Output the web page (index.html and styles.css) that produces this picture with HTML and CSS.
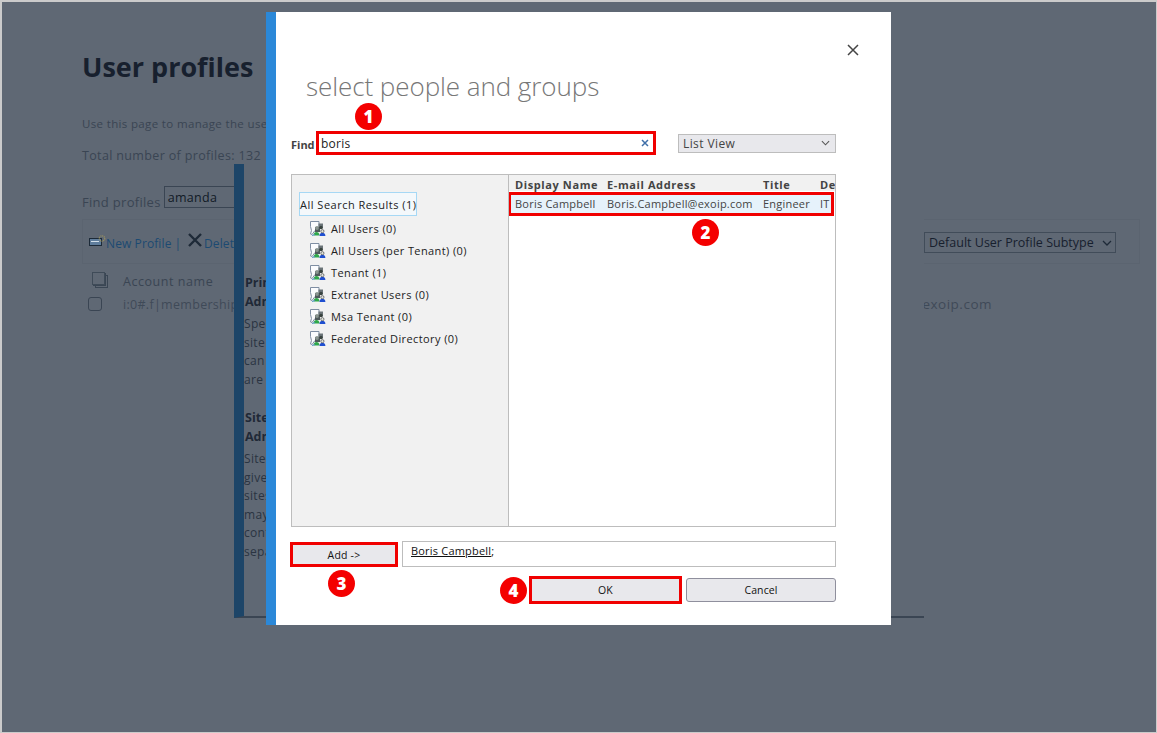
FILE: index.html
```html
<!DOCTYPE html>
<html lang="en">
<head>
<meta charset="utf-8">
<title>User profiles</title>
<link rel="stylesheet" href="styles.css">
</head>
<body>
<svg class="defs" width="0" height="0" aria-hidden="true">
  <symbol id="people" viewBox="0 0 17 17">
    <path d="M1.500 1.500h8.500v7l-4 2-3 4-1.500-.5 1-3.500-1-4z" fill="#fbfcfe" stroke="#7f8ea3" stroke-width="1"/>
    <path d="M9.500 3.500h4.500v5h-4.500z" fill="#6b7478"/>
    <path d="M6 7h5v5H6z" fill="#4f5a5c"/>
    <circle cx="8" cy="8" r="1.900" fill="#8a9590"/>
    <circle cx="12" cy="7.500" r="1.700" fill="#39433f"/>
    <path d="M4.500 15.500c0-2.300 1.500-3.400 3-3.400s3 1.100 3 3.400z" fill="#2fa84a"/>
    <path d="M10.500 16c0-2.200 1.300-3.300 2.900-3.300s3 1.100 3 3.300z" fill="#1f4fd0"/>
    <circle cx="13.400" cy="11.200" r="1.600" fill="#dfe3dc" stroke="#333" stroke-width=".6"/>
    <path d="M3 15.500l3-1" stroke="#4f8fc8" stroke-width="1"/>
  </symbol>
</svg>
<div class="screen">
  <main class="page">
    <h1 class="page-title">User profiles</h1>
    <p class="page-intro">Use this page to manage the user profiles</p>
    <p class="page-total">Total number of profiles: 132</p>
    <div class="find-profiles">
      <label class="find-profiles-label">Find profiles</label>
      <span class="find-profiles-input">amanda</span>
    </div>
    <div class="toolbar">
      <svg class="tb-icon-new" viewBox="0 0 17 12" width="17" height="12" aria-hidden="true">
        <rect x="0.500" y="3.500" width="12" height="7" fill="#5f7d9c" stroke="#1c2a38"/>
        <path d="M2 6.500h8" stroke="#d3dfe9"/>
        <circle cx="13" cy="3.500" r="2.700" fill="none" stroke="#9a9160" stroke-width="1.300" stroke-dasharray="1 .8"/>
      </svg>
      <span class="tb-link">New Profile</span>
      <span class="tb-sep">|</span>
      <svg class="tb-icon-del" viewBox="0 0 14 14" width="14" height="14" aria-hidden="true">
        <path d="M1 1l12 12M13 1L1 13" stroke="#1e2a38" stroke-width="2.400"/>
      </svg>
      <span class="tb-link">Delete</span>
      <span class="subtype">Default User Profile Subtype
        <svg class="chev" viewBox="0 0 10 6" width="10" height="6" aria-hidden="true"><path d="M1 1l4 4 4-4" fill="none" stroke="#1e2a38" stroke-width="1.300"/></svg>
      </span>
    </div>
    <div class="list-head">
      <svg class="copy-icon" viewBox="0 0 16 16" width="16" height="16" aria-hidden="true">
        <rect x="3.500" y="3.500" width="12" height="12" fill="none" stroke="#3a4654"/>
        <rect x="1.500" y="1.500" width="12" height="12" fill="#5f6874" stroke="#3a4654"/>
        <rect x="0.500" y="0.500" width="12" height="12" fill="#5f6874" stroke="#3f4b58"/>
      </svg>
      <span>Account name</span>
    </div>
    <div class="list-row">
      <span class="check"></span>
      <span class="acct">i:0#.f|membership</span>
      <span class="acct-end">@exoip.com</span>
    </div>
  </main>

  <aside class="back-dialog">
    <h3 class="back-h">Primary<br>Admin</h3>
    <p class="back-p">Specify<br>site<br>can<br>are</p>
    <h3 class="back-h back-h-2">Site<br>Admin</h3>
    <p class="back-p">Site<br>give<br>sites<br>may<br>conf<br>sepa</p>
  </aside>

  <section class="dialog">
    <button class="close" aria-label="Close">
      <svg viewBox="0 0 12 12" width="12" height="12" aria-hidden="true"><path d="M1 1l10 10M11 1L1 11" stroke="#444" stroke-width="1.500"/></svg>
    </button>
    <h2 class="dialog-title">select people and groups</h2>
    <div class="find-row">
      <label class="find-label">Find</label>
      <div class="find-input">
        <span class="find-value">boris</span>
        <svg class="find-x" viewBox="0 0 8 8" width="8" height="8" aria-hidden="true"><path d="M1 1l6 6M7 1L1 7" stroke="#3f6fa8" stroke-width="1.500"/></svg>
      </div>
      <div class="view-select">
        <span>List View</span>
        <svg viewBox="0 0 10 6" width="9" height="6" aria-hidden="true"><path d="M1 1l4 4 4-4" fill="none" stroke="#555" stroke-width="1.200"/></svg>
      </div>
    </div>
    <div class="picker">
      <div class="tree">
        <div class="tree-root">All Search Results (1)</div>
        <ul class="tree-list">
          <li class="tree-item"><svg class="pi" width="17" height="17"><use href="#people"/></svg>All Users (0)</li>
          <li class="tree-item"><svg class="pi" width="17" height="17"><use href="#people"/></svg>All Users (per Tenant) (0)</li>
          <li class="tree-item"><svg class="pi" width="17" height="17"><use href="#people"/></svg>Tenant (1)</li>
          <li class="tree-item"><svg class="pi" width="17" height="17"><use href="#people"/></svg>Extranet Users (0)</li>
          <li class="tree-item"><svg class="pi" width="17" height="17"><use href="#people"/></svg>Msa Tenant (0)</li>
          <li class="tree-item"><svg class="pi" width="17" height="17"><use href="#people"/></svg>Federated Directory (0)</li>
        </ul>
      </div>
      <div class="results">
        <div class="res-head">
          <span class="c1">Display Name</span>
          <span class="c2">E-mail Address</span>
          <span class="c3">Title</span>
          <span class="c4">Department</span>
        </div>
        <div class="res-row">
          <span class="c1">Boris Campbell</span>
          <span class="c2">Boris.Campbell@exoip.com</span>
          <span class="c3">Engineer</span>
          <span class="c4">IT</span>
        </div>
      </div>
    </div>
    <div class="add-row">
      <button class="add-btn">Add -&gt;</button>
      <div class="add-field"><span class="add-name">Boris Campbell</span>;</div>
    </div>
    <div class="action-row">
      <button class="btn btn-ok">OK</button>
      <button class="btn btn-cancel">Cancel</button>
    </div>
  </section>

  <span class="badge b1">1</span>
  <span class="badge b2">2</span>
  <span class="badge b3">3</span>
  <span class="badge b4">4</span>
</div>
</body>
</html>
```
FILE: styles.css
```css
* { box-sizing: border-box; }
html, body { margin: 0; padding: 0; }
body { font-family: "Open Sans", "Noto Sans", sans-serif; background: #cfcfcf; }
.defs { position: absolute; }
.screen {
  position: relative;
  width: 1157px;
  height: 733px;
  overflow: hidden;
  background: #5f6874;
  border: 2px solid #cbcbcb;
  border-right-width: 1px;
  border-bottom-width: 1px;
}

/* dimmed page */
.page { padding: 47px 16px 0 80px; color: #3a4553; }
.page-title { margin: 0; font-size: 27px; line-height: 36px; font-weight: 700; color: #17202e; font-family: "Open Sans", sans-serif; }
.page-intro { margin: 31px 0 0; font-size: 11.500px; line-height: 16px; letter-spacing: .35px; }
.page-total { margin: 15px 0 0; font-size: 12.500px; line-height: 17px; letter-spacing: .35px; }
.find-profiles { display: flex; align-items: flex-start; gap: 3px; margin-top: 22px; }
.find-profiles-label { font-size: 13px; line-height: 24px; letter-spacing: .3px; margin-top: 4px; }
.find-profiles-input { width: 100px; height: 22px; border: 1px solid #3a4553; font-size: 12.500px; line-height: 18px; padding: 2px 0 0 3px; color: #111a26; letter-spacing: .3px; }
.toolbar {
  display: flex; align-items: center;
  width: 1058px; height: 45px; margin-top: 5px; padding: 0 23px 0 6px;
  border: 1px solid #5b6470;
  font-size: 12px;
}
.tb-icon-new { margin-top: -2px; }
.tb-link { color: #1c4a72; margin-top: 4px; letter-spacing: .1px; }
.tb-sep { color: #1c4a72; margin: 4px 6px 0 3px; }
.tb-icon-del { margin: -4px 2px 0 1px; }
.subtype {
  display: flex; align-items: center; justify-content: space-between;
  width: 192px; height: 21px; margin: 2px 0 0 auto; padding: 0 3px 0 4px;
  border: 1px solid #414c59; font-size: 12.500px; color: #17202e;
}
.list-head { display: flex; align-items: center; margin-top: 5px; height: 24px; font-size: 12.500px; letter-spacing: .55px; padding-left: 10px; }
.copy-icon { margin-right: 15px; margin-top: -2px; }
.list-row { display: flex; align-items: center; height: 20px; margin-top: 1px; font-size: 12.500px; letter-spacing: .3px; padding-left: 6px; color: #3f4a58; }
.check { width: 14px; height: 14px; border: 1px solid #3a4553; border-radius: 3px; margin-right: 21px; }
.acct-end { margin-left: auto; margin-right: 148px; font-size: 13.500px; letter-spacing: .5px; }

/* second dialog behind */
.back-dialog {
  position: absolute; left: 232px; top: 162px; width: 690px; height: 454px;
  background: #5f6874;
  border-left: 10px solid #1d4568; border-bottom: 2px solid #3a4553;
  padding: 110px 0 0 0; color: #2a3442; font-size: 12px;
}
.back-h { margin: 0; font-size: 12.500px; line-height: 18.500px; font-weight: 700; color: #1f2937; padding-left: 1px; }
.back-h-2 { margin-top: 20px; }
.back-p { margin: 4px 0 0; line-height: 18.500px; font-size: 12px; letter-spacing: .3px; color: #2a3442; }

/* main dialog */
.dialog {
  position: absolute; left: 264px; top: 10px; width: 625px; height: 613px;
  background: #fff; border-left: 10px solid #2b88d8;
  padding: 0 55px 0 15px;
  color: #333;
}
.close { position: absolute; right: 32px; top: 32px; padding: 0; border: 0; background: none; display: block; width: 12px; height: 12px; }
.close svg { display: block; }
.dialog-title { margin: 56px 0 0 15px; font-size: 26px; line-height: 36px; font-weight: 300; color: #777; font-family: "Open Sans", sans-serif; letter-spacing: -.07px; }
.find-row { display: flex; align-items: center; margin-top: 27px; height: 24px; }
.find-label { width: 25px; font-size: 11px; font-weight: 700; color: #444; margin-top: 2px; }
.find-input {
  display: flex; align-items: center; justify-content: space-between;
  width: 340px; height: 24px; border: 3px solid #f00000; padding: 0 4px 0 2px;
  font-size: 12px; color: #222; letter-spacing: .25px;
}
.view-select {
  display: flex; align-items: center; justify-content: space-between;
  width: 158px; height: 19px; margin-left: 22px; padding: 0 5px 0 4px;
  background: #e8e8ec; border: 1px solid #bdbdbd;
  font-size: 12px; color: #444; letter-spacing: .4px;
}
.picker { display: flex; width: 545px; height: 353px; margin-top: 19px; border: 1px solid #bdbdbd; font-size: 11px; }
.tree { width: 217px; background: #f1f1f1; border-right: 1px solid #bdbdbd; padding-top: 17px; padding-left: 7px; letter-spacing: .4px; }
.tree-root { display: inline-block; height: 24px; line-height: 24px; padding: 0; width: 118px; border: 1px solid #a6d8f5; background: #f4f8fb; color: #222; letter-spacing: .5px; white-space: nowrap; }
.tree-list { list-style: none; margin: 1px 0 0; padding: 0 0 0 10px; }
.tree-item { display: flex; align-items: center; height: 22px; color: #222; }
.pi { margin-right: 5px; flex: none; }
.results { position: relative; flex: 1; min-width: 0; overflow: hidden; background: #fff; }
.res-head, .res-row { display: flex; white-space: nowrap; padding-left: 6px; }
.res-head { height: 16px; background: #f1f1f1; font-weight: 700; color: #444; line-height: 20px; letter-spacing: .6px; }
.res-row {
  height: 24px; margin-top: 1px; line-height: 17px; background: #e6f2fb; color: #444;
  border: 3px solid #f00000; padding-left: 4px; letter-spacing: .22px;
  width: 326px; margin-left: -1px;
}
.c1 { width: 92px; flex: none; }
.c2 { width: 156px; flex: none; }
.c3 { width: 57px; flex: none; }
.c4 { flex: none; }
.add-row { display: flex; align-items: stretch; margin: 14px 0 0 -1px; height: 26px; }
.add-btn { width: 108px; height: 25px; margin-top: 1px; border: 3px solid #f00000; background: #e8e8ec; font: inherit; font-size: 10.500px; color: #111; padding: 0; letter-spacing: .2px; }
.add-field { width: 434px; margin-left: 4px; border: 1px solid #bdbdbd; font-size: 11px; line-height: 18px; padding-left: 8px; color: #111; letter-spacing: .2px; }
.add-name { text-decoration: underline; }
.action-row { display: flex; align-items: center; margin: 9px 0 0 238px; height: 28px; }
.btn { font: inherit; font-size: 10.500px; color: #111; background: #e8e8ec; padding: 0; letter-spacing: .1px; }
.btn-ok { width: 153px; height: 28px; border: 3px solid #f00000; }
.btn-cancel { width: 150px; height: 24px; margin-left: 4px; border: 1px solid #8f8f9d; border-radius: 3px; }

/* numbered callouts */
.badge {
  position: absolute; width: 27px; height: 27px; border-radius: 50%;
  background: #f40000; color: #fff; text-align: center;
  font: 800 17px/27px "Open Sans", sans-serif;
}
.b1 { left: 353px; top: 101px; }
.b2 { left: 690px; top: 217px; }
.b3 { left: 326px; top: 568px; }
.b4 { left: 498px; top: 575px; }
```
